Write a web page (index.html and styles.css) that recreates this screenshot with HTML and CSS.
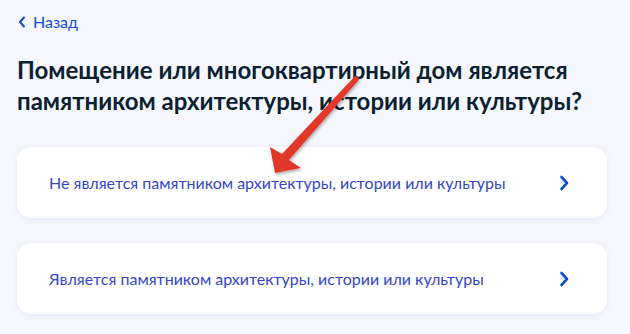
FILE: index.html
```html
<!DOCTYPE html>
<html lang="ru">
<head>
<meta charset="utf-8">
<link rel="stylesheet" href="styles.css">
</head>
<body>
<div class="page">
  <a class="back" href="#">
    <svg class="back-icon" width="8" height="12" viewBox="0 0 8 12"><path d="M6 1.5 L2 6 L6 10.5" fill="none" stroke="#0d4cd3" stroke-width="2" stroke-linecap="round" stroke-linejoin="round"/></svg>
    <span>Назад</span>
  </a>
  <h1 class="title">Помещение или многоквартирный дом является памятником архитектуры, истории или культуры?</h1>
  <div class="options">
    <a class="option" href="#">
      <span class="option-text">Не является памятником архитектуры, истории или культуры</span>
      <svg class="chev" width="10" height="16" viewBox="0 0 10 16"><path d="M2.5 2 L8 8 L2.5 14" fill="none" stroke="#0d4cd3" stroke-width="2.6" stroke-linecap="round" stroke-linejoin="round"/></svg>
    </a>
    <a class="option" href="#">
      <span class="option-text">Является памятником архитектуры, истории или культуры</span>
      <svg class="chev" width="10" height="16" viewBox="0 0 10 16"><path d="M2.5 2 L8 8 L2.5 14" fill="none" stroke="#0d4cd3" stroke-width="2.6" stroke-linecap="round" stroke-linejoin="round"/></svg>
    </a>
  </div>
  <svg class="pointer" width="630" height="334" viewBox="0 0 630 334">
    <defs>
      <filter id="sh" x="-20%" y="-20%" width="140%" height="140%">
        <feDropShadow dx="1" dy="2" stdDeviation="1.5" flood-color="#000" flood-opacity="0.3"/>
      </filter>
    </defs>
    <polygon filter="url(#sh)" fill="#e2372b" points="355.5,75.5 359.5,79 289,160 301,168 275,173 270,147 282,154"/>
  </svg>
</div>
</body>
</html>
```

FILE: styles.css
```css
html, body {
  margin: 0;
  padding: 0;
  background: #f5f7fc;
}
body {
  font-family: Lato, "Noto Sans", sans-serif;
  width: 630px;
  height: 334px;
  overflow: hidden;
}
.page {
  position: relative;
  padding: 12px 23px 0 17px;
}
.back {
  display: flex;
  align-items: center;
  gap: 7px;
  color: #0d4cd3;
  text-decoration: none;
  font-size: 16px;
  line-height: 20px;
  padding-left: 1px;
}
.back-icon {
  display: block;
}
.title {
  margin: 22px 0 0 0;
  font-size: 24px;
  line-height: 31px;
  font-weight: 700;
  color: #0b1f33;
  letter-spacing: 0;
}
.options {
  display: flex;
  flex-direction: column;
  gap: 25px;
  margin-top: 31px;
}
.option {
  display: flex;
  align-items: center;
  justify-content: space-between;
  height: 71px;
  background: #fff;
  border-radius: 14px;
  box-shadow: 0 1px 6px rgba(40, 70, 140, 0.08);
  padding: 0 38px 0 32px;
  text-decoration: none;
}
.option-text {
  color: #3346c8;
  font-size: 16px;
  line-height: 20px;
}
.chev {
  display: block;
}
.pointer {
  position: absolute;
  left: 0;
  top: 0;
  pointer-events: none;
}
```
